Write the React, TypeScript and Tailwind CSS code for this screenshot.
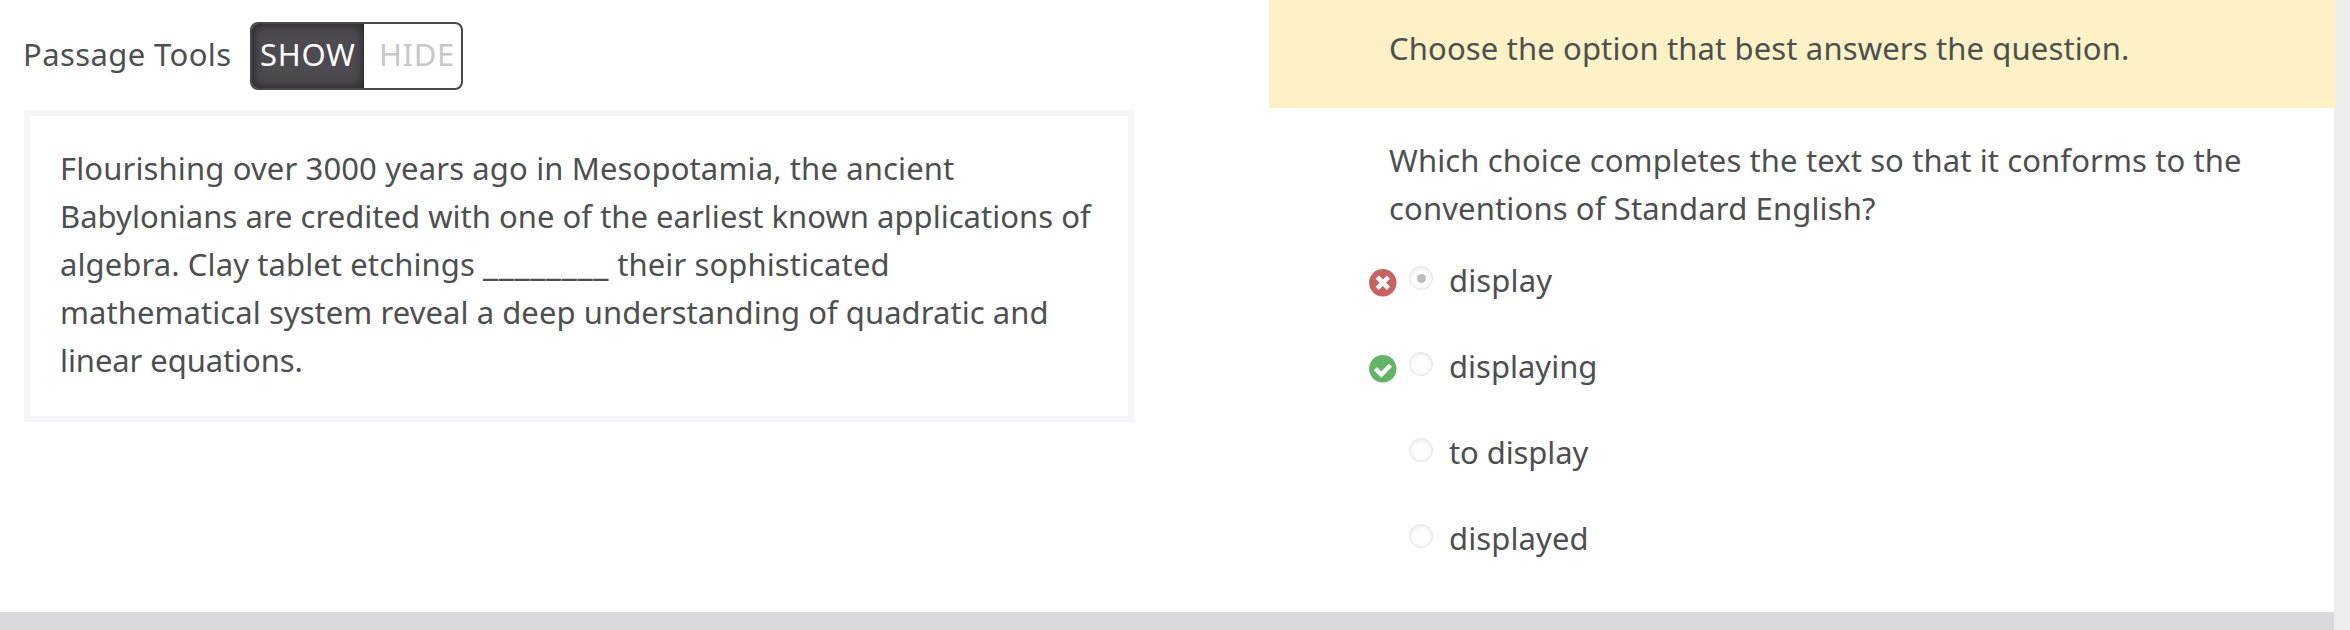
type Mark = "wrong" | "right" | null;

const passage: { text: string; spacing: string }[] = [
  { text: "Flourishing over 3000 years ago in Mesopotamia, the ancient", spacing: "tracking-[0.13px]" },
  { text: "Babylonians are credited with one of the earliest known applications of", spacing: "tracking-[0.02px]" },
];

const options: { label: string; mark: Mark; selected: boolean; spacing: string }[] = [
  { label: "display", mark: "wrong", selected: true, spacing: "tracking-[0.15px]" },
  { label: "displaying", mark: "right", selected: false, spacing: "tracking-normal" },
  { label: "to display", mark: null, selected: false, spacing: "tracking-[-0.1px]" },
  { label: "displayed", mark: null, selected: false, spacing: "tracking-[0.1px]" },
];

function MarkIcon({ mark }: { mark: Mark }) {
  if (!mark) return <span className="block size-7 shrink-0" />;
  return (
    <svg viewBox="0 0 28 28" className="size-7 shrink-0" fill="none">
      <circle cx="13.8" cy="13.7" r="13.7" fill={mark === "wrong" ? "#c96161" : "#60b566"} />
      {mark === "wrong" ? (
        <path d="M9.8 9.7l8 8M17.8 9.7l-8 8" stroke="#fff" strokeWidth="4.6" strokeLinecap="square" />
      ) : (
        <path d="M6.4 13.6l6 6L21.4 10.2" stroke="#fff" strokeWidth="4.4" />
      )}
    </svg>
  );
}

function Radio({ selected }: { selected: boolean }) {
  return (
    <span className="flex size-6 shrink-0 items-center justify-center rounded-full border border-[#e4e4e4] bg-[#fdfdfd] shadow-[inset_0_1px_4px_rgba(0,0,0,0.09)]">
      {selected && <span className="size-[9px] rounded-full bg-[#bdbdbd]" />}
    </span>
  );
}

export default function App() {
  return (
    <div className="flex h-[630px] w-[2350px] overflow-hidden bg-[#ededed] font-['Noto_Sans',sans-serif] text-[31px] leading-[48px] whitespace-nowrap text-[#4c504f]">
      <div className="flex w-[2334px] shrink-0 flex-col">
        <div className="flex h-[612px] bg-white">
          <section className="w-[1269px] shrink-0 pt-[22px] pl-6">
            <div className="flex h-[68px]">
              <span className="-ml-px w-[227px] pt-2 tracking-[0.4px]">Passage Tools</span>
              <div className="flex h-[68px] w-[213px] overflow-hidden rounded-lg border-2 border-[#4b494e]">
                <button className="w-28 bg-[#4d4b50] pb-1 pl-2 text-left tracking-[0.7px] text-white shadow-[inset_0_0_12px_rgba(0,0,0,0.65)]">SHOW</button>
                <button className="flex-1 pb-1 pl-[15px] text-left tracking-[0.6px] text-[#c8c8c8]">HIDE</button>
              </div>
            </div>
            <article className="mt-5 h-[312px] w-[1110px] border-6 border-[#f6f6f9] pt-7 pl-[30px]">
              {passage.map((line) => (
                <p key={line.text} className={line.spacing}>{line.text}</p>
              ))}
              <p className="tracking-[0.1px]">
                algebra. Clay tablet etchings <span className="text-[34px] leading-none tracking-[0.65px]">________</span> their sophisticated
              </p>
              <p className="tracking-[0.06px]">mathematical system reveal a deep understanding of quadratic and</p>
              <p className="tracking-[-0.09px]">linear equations.</p>
            </article>
          </section>
          <section className="flex-1">
            <div className="h-[108px] w-[1067px] bg-[#fdf1c6] pt-6 pl-[120px]">
              <p className="tracking-[0.132px]">Choose the option that best answers the question.</p>
            </div>
            <div className="pt-7 pl-[120px]">
              <p className="tracking-[0.109px]">Which choice completes the text so that it conforms to the</p>
              <p className="tracking-[0.14px]">conventions of Standard English?</p>
            </div>
            <ul className="pt-6 pl-[100px]">
              {options.map((o) => (
                <li key={o.label} className="flex h-[86px] items-start">
                  <span className="pt-[13px]"><MarkIcon mark={o.mark} /></span>
                  <span className="pt-[10px] pl-3"><Radio selected={o.selected} /></span>
                  <span className={`pl-4 ${o.spacing}`}>{o.label}</span>
                </li>
              ))}
            </ul>
          </section>
        </div>
        <div className="h-[18px] bg-[#dadadc]" />
      </div>
    </div>
  );
}
